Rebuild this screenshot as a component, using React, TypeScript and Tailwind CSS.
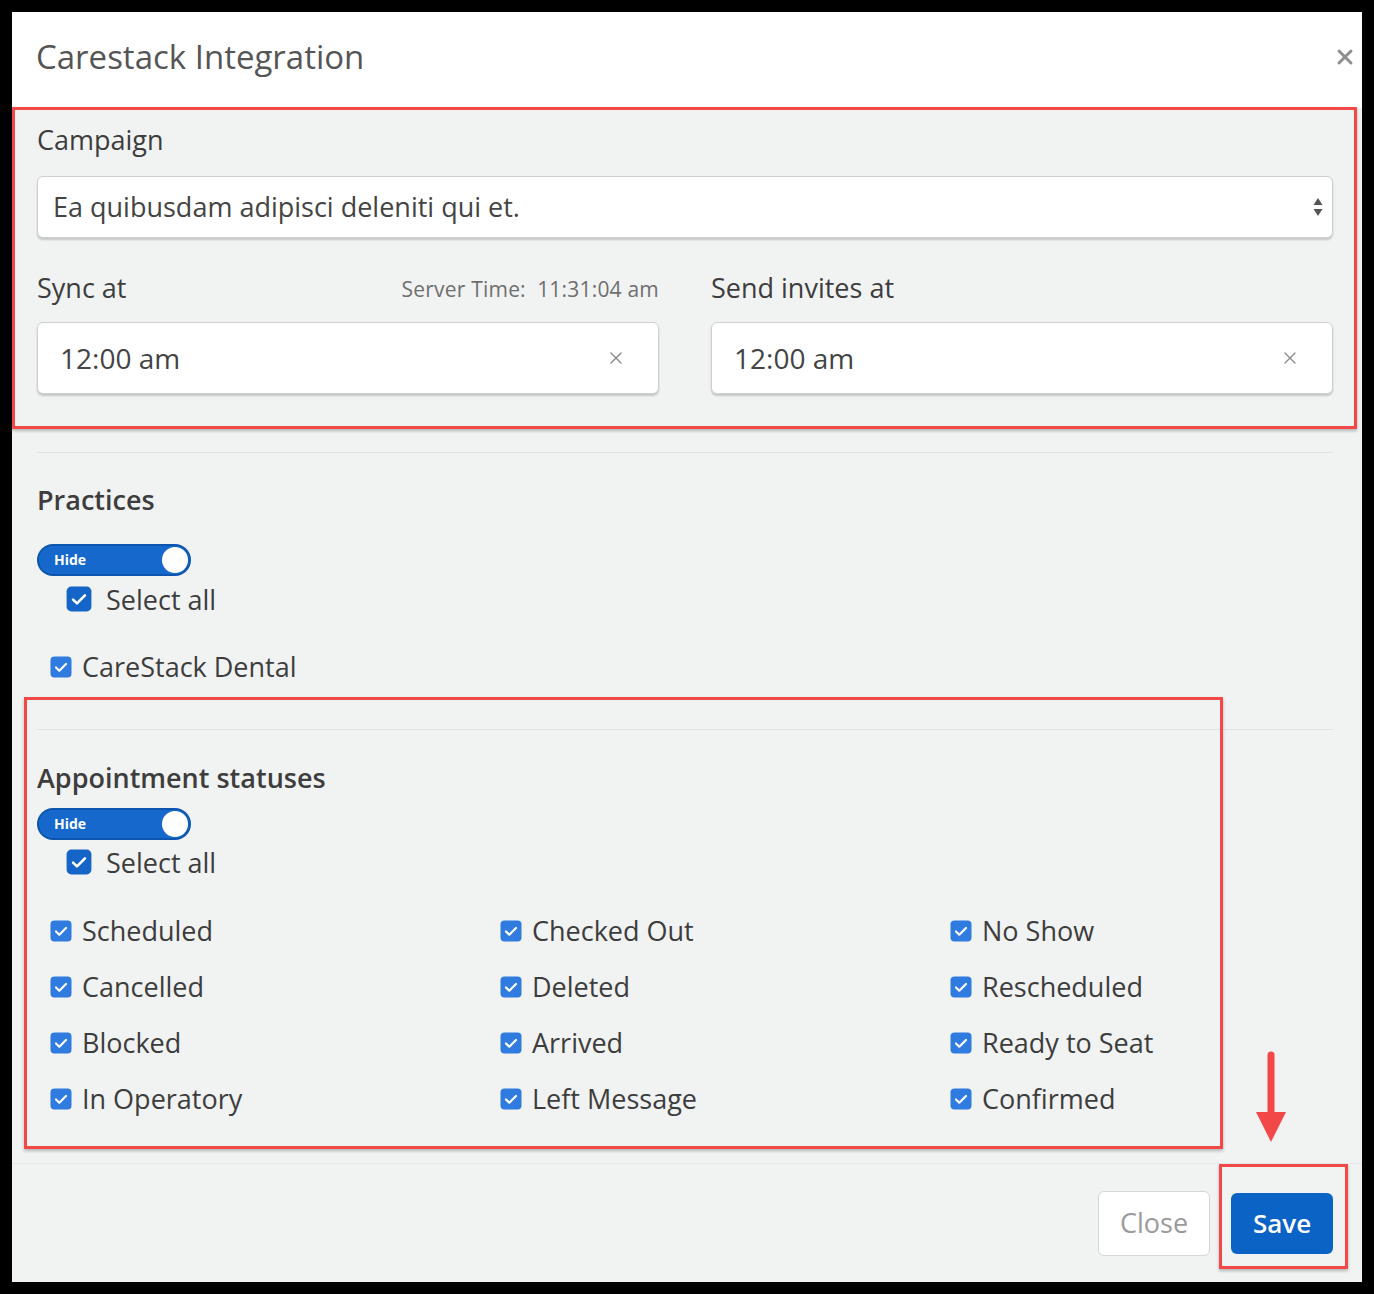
import { X } from 'lucide-react';

const statuses = [
	['Scheduled', 'Checked Out', 'No Show'],
	['Cancelled', 'Deleted', 'Rescheduled'],
	['Blocked', 'Arrived', 'Ready to Seat'],
	['In Operatory', 'Left Message', 'Confirmed'],
];

function Check({ size = 22, dark = false }: { size?: number; dark?: boolean }) {
	return (
		<svg width={size} height={size} viewBox="0 0 22 22" className="shrink-0">
			<rect x="0.5" y="0.5" width="21" height="21" rx="4" fill={dark ? '#1565c8' : '#2f7be0'} />
			<path d="M6 11.5l3.3 3.2L16 8" fill="none" stroke="#fff" strokeWidth="2.2" strokeLinecap="round" strokeLinejoin="round" />
		</svg>
	);
}

function Toggle() {
	return (
		<div className="flex h-[32px] w-[154px] items-center justify-between rounded-full border-2 border-[#0d55ad] bg-[#1668cc] pl-[15px] pr-[1px]">
			<span className="text-[14px] font-bold leading-none text-white">Hide</span>
			<span className="h-[26px] w-[26px] rounded-full bg-white" />
		</div>
	);
}

function SelectAll() {
	return (
		<div className="flex h-[26px] items-center gap-[14px] pl-[29px]">
			<Check size={26} dark />
			<span className="text-[27px] leading-none text-[#3d3d3d]">Select all</span>
		</div>
	);
}

function Item({ label }: { label: string }) {
	return (
		<div className="flex h-[36px] items-center gap-[10px]">
			<Check />
			<span className="text-[27px] leading-[36px] text-[#3d3d3d]">{label}</span>
		</div>
	);
}

function TimeInput() {
	return (
		<div className="flex h-[72px] items-center justify-between rounded-[6px] border border-[#cfcfcf] bg-white pl-[22px] pr-[32px] shadow-[0_2px_2px_rgba(0,0,0,0.18)]">
			<span className="text-[28px] text-[#444]">12:00 am</span>
			<X size={20} strokeWidth={1.6} className="text-[#8a8a8a]" />
		</div>
	);
}

export default function App() {
	return (
		<div className="relative h-[1294px] w-[1374px] bg-black p-[12px] font-['Open_Sans',sans-serif]">
			<div className="flex h-[1270px] w-[1350px] flex-col bg-[#f1f2f2]">
				<header className="flex h-[96px] shrink-0 items-center justify-between bg-white pb-[6px] pl-[24px] pr-[5px]">
					<h1 className="text-[33px] font-normal text-[#555]">Carestack Integration</h1>
					<X size={24} strokeWidth={3} className="text-[#8f8f8f]" />
				</header>

				<main className="flex flex-col pl-[25px] pr-[29px] pt-[14px]">
					<label className="text-[27px] leading-[36px] text-[#3d3d3d]">Campaign</label>
					<div className="mt-[18px] flex h-[62px] items-center justify-between rounded-[6px] border border-[#cfcfcf] bg-white pl-[15px] pr-[8px] shadow-[0_2px_2px_rgba(0,0,0,0.18)]">
						<span className="text-[27px] text-[#444]">Ea quibusdam adipisci deleniti qui et.</span>
						<svg width="12" height="24" viewBox="0 0 12 24">
							<path d="M6 3l4.5 7h-9z" fill="#555" />
							<path d="M6 21l4.5-7h-9z" fill="#555" />
						</svg>
					</div>

					<div className="mt-[32px] grid grid-cols-2 gap-x-[52px]">
						<div className="flex flex-col">
							<div className="flex h-[36px] items-center justify-between">
								<span className="text-[27px] text-[#3d3d3d]">Sync at</span>
								<span className="pt-[3px] text-[21px] tracking-[0.2px] text-[#6f6f6f]">Server Time:&nbsp; 11:31:04 am</span>
							</div>
							<div className="mt-[16px]">
								<TimeInput />
							</div>
						</div>
						<div className="flex flex-col">
							<div className="flex h-[36px] items-center">
								<span className="text-[27px] text-[#3d3d3d]">Send invites at</span>
							</div>
							<div className="mt-[16px]">
								<TimeInput />
							</div>
						</div>
					</div>

					<hr className="mt-[58px] border-[#e0e1e1]" />

					<h3 className="mt-[29px] text-[27px] font-semibold leading-[36px] text-[#3d3d3d]">Practices</h3>
					<div className="mt-[26px]">
						<Toggle />
					</div>
					<div className="mt-[10px]">
						<SelectAll />
					</div>
					<div className="mt-[37px] pl-[13px]">
						<Item label="CareStack Dental" />
					</div>

					<hr className="mt-[44px] border-[#e0e1e1]" />

					<h3 className="mt-[30px] text-[27px] font-semibold leading-[36px] text-[#3d3d3d]">Appointment statuses</h3>
					<div className="mt-[12px]">
						<Toggle />
					</div>
					<div className="mt-[9px]">
						<SelectAll />
					</div>
					<div className="mt-[38px] grid grid-cols-[450px_450px_450px] gap-y-[20px] pl-[13px]">
						{statuses.flat().map(s => (
							<Item key={s} label={s} />
						))}
					</div>
				</main>

				<footer className="mt-auto flex h-[119px] shrink-0 items-center justify-end gap-[21px] border-t border-[#e6e7e7] pr-[29px]">
					<button className="h-[65px] w-[112px] rounded-[6px] border border-[#d6d6d6] bg-white text-[27px] text-[#9a9a9a]">
						Close
					</button>
					<button className="h-[61px] w-[102px] rounded-[6px] bg-[#0b63c6] text-[26px] font-semibold text-white">
						Save
					</button>
				</footer>
			</div>

			{/* annotation overlays */}
			<div className="pointer-events-none absolute left-[12px] top-[107px] h-[322px] w-[1345px] border-[3px] border-[#f24848] shadow-[0_2px_3px_rgba(0,0,0,0.25)]" />
			<div className="pointer-events-none absolute left-[24px] top-[697px] h-[452px] w-[1199px] border-[3px] border-[#f24848] shadow-[0_2px_3px_rgba(0,0,0,0.25)]" />
			<div className="pointer-events-none absolute left-[1219px] top-[1164px] h-[105px] w-[129px] border-[3px] border-[#f24848] shadow-[0_2px_3px_rgba(0,0,0,0.25)]" />
			<svg className="pointer-events-none absolute left-[1255px] top-[1050px]" width="32" height="94" viewBox="0 0 32 94">
				<line x1="16" y1="5" x2="16" y2="66" stroke="#f24848" strokeWidth="7" strokeLinecap="round" />
				<path d="M1 62h30L16 92z" fill="#f24848" />
			</svg>
		</div>
	);
}
